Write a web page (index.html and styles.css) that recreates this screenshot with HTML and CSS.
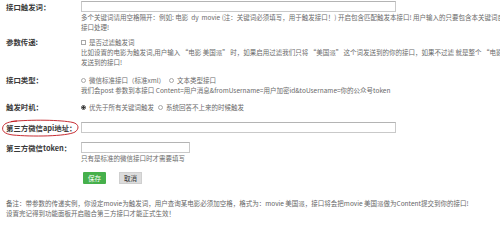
FILE: index.html
```html
<!DOCTYPE html>
<html lang="zh">
<head>
<meta charset="utf-8">
<link rel="stylesheet" href="styles.css">
</head>
<body>
<div class="form">
  <div class="row row-1">
    <div class="label label-input">接口触发词：</div>
    <div class="field">
      <div class="input input-wide"></div>
      <p class="tip">多个关键词请用空格隔开：例如: 电影&nbsp;&nbsp;dy&nbsp;&nbsp;movie (注：关键词必须填写，用于触发接口！) 开启包含匹配触发本接口! 用户输入的只要包含本关键词自动触发本接口处理!</p>
    </div>
  </div>
  <div class="row row-2">
    <div class="label">参数传递:</div>
    <div class="field">
      <div class="opt-line"><span class="checkbox"></span><span class="opt">是否过滤触发词</span></div>
      <p class="tip">比如设置的电影为触发词,用户输入 “电影 美国派” 时，如果启用过滤我们只将 “美国派” 这个词发送到的你的接口，如果不过滤 就是整个 “电影 美国派” 发送到的接口!</p>
    </div>
  </div>
  <div class="row row-3">
    <div class="label">接口类型：</div>
    <div class="field">
      <div class="opt-line"><span class="radio"></span><span class="opt">微信标准接口（标准xml）</span><span class="radio"></span><span class="opt">文本类型接口</span></div>
      <p class="tip">我们会post 参数到本接口 Content=用户消息&amp;fromUsername=用户加密id&amp;toUsername=你的公众号token</p>
    </div>
  </div>
  <div class="row row-4">
    <div class="label">触发时机：</div>
    <div class="field">
      <div class="opt-line"><span class="radio checked"></span><span class="opt">优先于所有关键词触发</span><span class="radio"></span><span class="opt">系统回答不上来的时候触发</span></div>
    </div>
  </div>
  <div class="row row-5">
    <div class="label label-input marked">第三方微信api地址：
      <svg class="circle" width="80" height="20" viewBox="0 0 80 20"><path d="M10 3.5 C30 1.5 60 1.8 72 4.5 C78 6 78.5 11 74 14 C66 18.5 30 18.8 12 17 C3 16 0.5 12.5 2 8.5 C3.5 5 8 3.8 16 3" fill="none" stroke="#c0161d" stroke-width="0.9"/></svg>
    </div>
    <div class="field">
      <div class="input input-wide"></div>
    </div>
  </div>
  <div class="row row-6">
    <div class="label label-input">第三方微信token：</div>
    <div class="field">
      <div class="input input-short"></div>
      <p class="tip">只有是标准的微信接口时才需要填写</p>
    </div>
  </div>
  <div class="row row-7">
    <div class="label"></div>
    <div class="field buttons">
      <span class="btn btn-save">保存</span>
      <span class="btn btn-cancel">取消</span>
    </div>
  </div>
  <div class="note">
    <p>备注：带参数的传递实例，你设定movie为触发词，用户查询某电影必须加空格，格式为：movie 美国派，接口将会把movie 美国派做为Content提交到你的接口!</p>
    <p>设置完记得到功能面板开启融合第三方接口才能正式生效！</p>
  </div>
</div>
</body>
</html>
```
FILE: styles.css
```css
html, body {
  margin: 0;
  padding: 0;
  overflow: hidden;
  background: #fff;
}
body {
  font-family: "Microsoft YaHei", "Noto Sans CJK SC", "Liberation Sans", sans-serif;
  color: #666;
  width: 500px;
  height: 228px;
}
.form {
  padding: 1px 0 0 6px;
  width: 560px;
}
.row {
  display: grid;
  grid-template-columns: 75px 455px;
}
.row-2 { margin-top: 5px; }
.row-3 { margin-top: 8px; }
.row-4 { margin-top: 7px; }
.row-5 { margin-top: 10px; }
.row-6 { margin-top: 9px; }
.row-7 { margin-top: 9px; }
.label {
  font-size: 7.4px;
  font-weight: bold;
  color: #3a3a3a;
  line-height: 10px;
  white-space: nowrap;
}
.label-input {
  line-height: 11px;
}
.marked {
  position: relative;
}
.circle {
  position: absolute;
  left: -5px;
  top: -4px;
}
.field {
  font-size: 6.5px;
}
.input {
  box-sizing: border-box;
  height: 11px;
  border: 1px solid #c9c9c9;
  border-top-color: #b4b4b4;
  background: #fff;
}
.input-wide { width: 315px; }
.input-short { width: 109px; }
.tip {
  margin: 0;
  line-height: 10px;
  color: #6a6a6a;
  font-size: 6.5px;
}
.opt-line {
  display: flex;
  align-items: center;
  height: 10px;
  color: #6a6a6a;
}
.opt { margin-right: 4px; }
.checkbox {
  box-sizing: border-box;
  width: 5px;
  height: 5px;
  border: 1px solid #a8a8a8;
  margin: 0 3px 0 0;
}
.radio {
  box-sizing: border-box;
  width: 5px;
  height: 5px;
  border: 1px solid #a8a8a8;
  border-radius: 50%;
  margin: 0 3px 0 0;
}
.radio.checked {
  border-color: #555;
  background: radial-gradient(circle, #333 50%, #fff 60%);
}
.buttons {
  display: flex;
  align-items: center;
  gap: 13px;
  padding-left: 2px;
}
.btn {
  box-sizing: border-box;
  width: 23px;
  height: 12px;
  line-height: 12px;
  text-align: center;
  font-size: 6.5px;
}
.btn-save {
  background: #46b04b;
  color: #fff;
  border-radius: 1px;
}
.btn-cancel {
  background: #dcdcdc;
  border: 1px solid #cfcfcf;
  color: #333;
  line-height: 10px;
}
.note {
  margin-top: 14px;
}
.note p {
  margin: 0;
  font-size: 6.5px;
  line-height: 10px;
  color: #666;
  white-space: nowrap;
}
```
